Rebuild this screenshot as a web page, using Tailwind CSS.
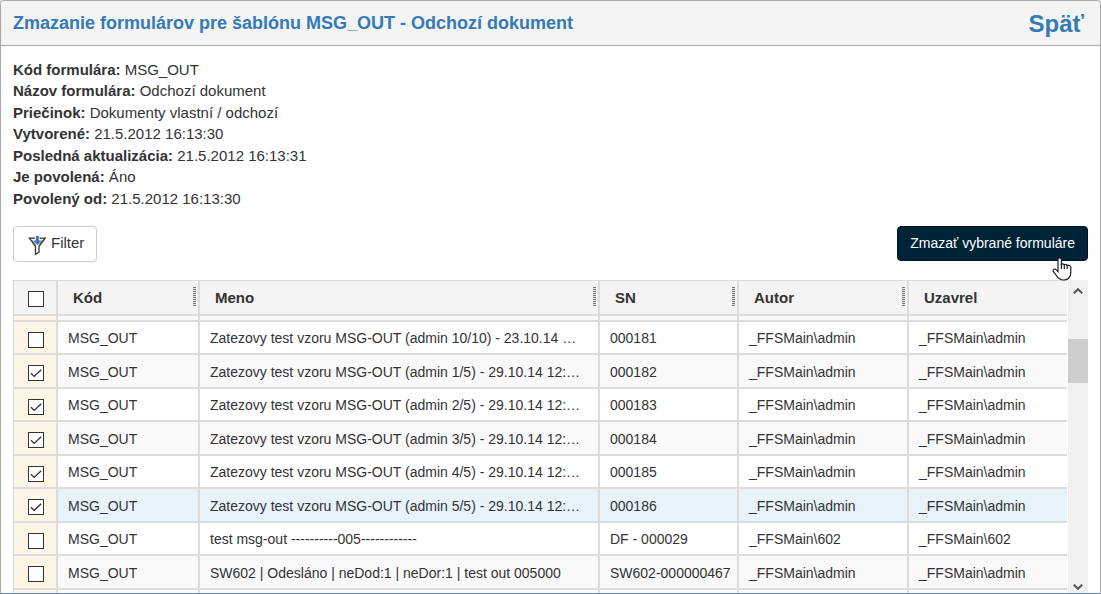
<!DOCTYPE html>
<html lang="sk">
<head>
<meta charset="utf-8">
<title>Zmazanie formulárov</title>
<script src="https://cdn.jsdelivr.net/npm/@tailwindcss/browser@4"></script>
</head>
<body class="bg-[#dcdcdc] font-['Liberation_Sans',Arial,sans-serif] text-[15px] text-[#333]">
<div class="flex h-screen flex-col overflow-hidden rounded-t-[5px] border border-[#a9a9a9] border-b-[#5b85b5] bg-white">
  <header class="flex h-[45px] shrink-0 items-center justify-between border-b border-[#a9a9a9] bg-[#f4f4f4] px-3 pr-4 text-[#337ab7]">
    <h1 class="text-[18px] font-bold">Zmazanie formulárov pre šablónu MSG_OUT - Odchozí dokument</h1>
    <a href="#" class="pt-[2px] text-[24px] font-bold">Späť</a>
  </header>
  <main class="flex min-h-0 flex-1 flex-col px-3 pt-[13px]">
    <div class="leading-[1.43]">
      <p><b>Kód formulára:</b> MSG_OUT</p>
      <p><b>Názov formulára:</b> Odchozí dokument</p>
      <p><b>Priečinok:</b> Dokumenty vlastní / odchozí</p>
      <p><b>Vytvorené:</b> 21.5.2012 16:13:30</p>
      <p><b>Posledná aktualizácia:</b> 21.5.2012 16:13:31</p>
      <p><b>Je povolená:</b> Áno</p>
      <p><b>Povolený od:</b> 21.5.2012 16:13:30</p>
    </div>
    <div class="mt-[17px] flex shrink-0 items-start justify-between">
      <button type="button" class="flex h-9 items-center gap-1 rounded border border-[#ccc] bg-white pr-3 pl-[14px]">
        <svg class="mt-[2px] h-[21px] w-[19px]" viewBox="0 0 19 21" fill="none" aria-hidden="true">
          <path d="M7 3.2H1.4L7.5 11.3V19.3L11 17.2V11.3L17.2 3.2H11.6" stroke="#333" stroke-width="1.3"/>
          <path d="M4 5.2L7.6 9.6M14.6 5.2L11 9.6" stroke="#555" stroke-width=".8"/>
          <path d="M8 1H10.8V5.6H13.6L9.4 10L5.2 5.6H8Z" fill="#337ab7"/>
        </svg>
        <span class="pb-px">Filter</span>
      </button>
      <div class="relative">
        <button type="button" class="h-[35px] rounded border border-[#00141f] bg-[#002337] px-3 text-[14px] text-white">Zmazať vybrané formuláre</button>
        <svg class="absolute top-[31px] right-[16px] h-[24px] w-[20px]" viewBox="0 0 20 24" aria-hidden="true">
          <path d="M6 2Q7.8 -.2 9.4 2V7.4Q11 6.2 12.2 7.8Q14 6.8 15 8.4Q17.4 7.6 18.8 9.8V15.5Q18.8 22.5 12 23Q7 23 4 18L1.1 14.2Q.8 11.6 3.6 12.2L6 14.6Z" fill="#fff" stroke="#1c1c2c" stroke-width="1.2"/>
          <path d="M9.4 7V12M12.3 7.8V12M15.2 8.4V12" stroke="#1c1c2c" stroke-width="1.2"/>
        </svg>
      </div>
    </div>
    <div class="mt-[18px] flex min-h-0 flex-1 gap-px">
      <div class="min-w-0 flex-1 overflow-hidden">
        <table class="w-full table-fixed border-separate border-spacing-0 text-left">
          <colgroup><col class="w-[45px]"><col class="w-[142px]"><col><col class="w-[139px]"><col class="w-[170px]"><col class="w-[158px]"></colgroup>
          <thead><tr id="head" class="h-9"></tr></thead>
          <tbody id="rows" class="text-[14px]"></tbody>
        </table>
      </div>
      <div class="flex w-5 shrink-0 flex-col items-center bg-[#f0f0f0] pt-2 pb-[3px]">
        <svg class="h-[6px] w-[10px]" viewBox="0 0 10 6" fill="none" aria-hidden="true"><path d="M.8 5.3L5 1.2L9.2 5.3" stroke="#555" stroke-width="2"/></svg>
        <div class="mt-[45px] h-11 w-full bg-[#cdcdcd]"></div>
        <svg class="mt-auto h-[6px] w-[10px]" viewBox="0 0 10 6" fill="none" aria-hidden="true"><path d="M.8 .7L5 4.8L9.2 .7" stroke="#555" stroke-width="2"/></svg>
      </div>
    </div>
  </main>
</div>
<script>
const tick = '<svg class="pointer-events-none col-start-1 row-start-1 size-4" viewBox="0 0 16 16" fill="none" aria-hidden="true"><path d="M3 8.3L6.2 11.4L13.2 4.8" stroke="#333" stroke-width="1.4"/></svg>';
const box = (label, on) => `<span class="grid w-4"><input type="checkbox" aria-label="${label}" ${on ? 'checked' : ''} class="col-start-1 row-start-1 size-4 appearance-none border border-[#333] bg-white">${on ? tick : ''}</span>`;
const grip = '<span class="mb-[3px] h-[19px] w-[3px] bg-[repeating-linear-gradient(#777_0_1px,#e4e4e4_1px_2px)]"></span>';

document.getElementById('head').innerHTML =
  `<th class="border-t border-r-2 border-b-2 border-l border-[#dcdcdc] bg-[#f4f4f4] p-0 pt-[10px] pl-[14px] align-top">${box('Vybrať všetko', false)}</th>` +
  ['Kód', 'Meno', 'SN', 'Autor'].map(t => `<th class="border-t border-r-2 border-b-2 border-[#dcdcdc] bg-[#f4f4f4] p-0 pr-[2px] pl-[15px]"><div class="flex items-center justify-between"><span class="pt-px">${t}</span>${grip}</div></th>`).join('') +
  '<th class="border-t border-b-2 border-[#dcdcdc] bg-[#f4f4f4] p-0 pl-[15px]"><span class="block pt-px">Uzavrel</span></th>';

const m = 'Zatezovy test vzoru MSG-OUT (admin ';
const data = [
  [0, m + '10/10) - 23.10.14 …', '000181', 'admin'],
  [1, m + '1/5) - 29.10.14 12:…', '000182', 'admin'],
  [1, m + '2/5) - 29.10.14 12:…', '000183', 'admin'],
  [1, m + '3/5) - 29.10.14 12:…', '000184', 'admin'],
  [1, m + '4/5) - 29.10.14 12:…', '000185', 'admin'],
  [1, m + '5/5) - 29.10.14 12:…', '000186', 'admin'],
  [0, 'test msg-out ----------005------------', 'DF - 000029', '602'],
  [0, 'SW602 | Odesláno | neDod:1 | neDor:1 | test out 005000', 'SW602-000000467', 'admin']
];
const edge = '<td class="border-r-2 border-b-2 border-l border-[#dcdcdc] bg-[#fdf5e6] p-0"></td>' +
  '<td class="border-r-2 border-b-2 border-[#dcdcdc] p-0"></td>'.repeat(4) + '<td class="border-b-2 border-[#dcdcdc] p-0"></td>';
const rows = data.map(([on, name, sn, who], i) => {
  const tr = i % 2 ? 'h-[34px]' : 'h-[33px]';
  const bg = i === 5 ? 'bg-[#e7f2fb]' : i % 2 ? 'bg-[#f9f9f9]' : 'bg-white';
  const cells = ['MSG_OUT', name, sn, '_FFSMain\\' + who]
    .map(t => `<td class="truncate border-r-2 border-b-2 border-[#dcdcdc] p-0 pt-[2px] pl-[10px] leading-[21px]">${t}</td>`).join('');
  return `<tr class="${tr} ${bg}"><td class="border-r-2 border-b-2 border-l border-[#dcdcdc] bg-[#fdf5e6] p-0 pt-[10px] pl-[14px] align-top">${box('Vybrať ' + sn, on)}</td>${cells}<td class="truncate border-b-2 border-[#dcdcdc] p-0 pt-[2px] pl-[10px] leading-[21px]">_FFSMain\\${who}</td></tr>`;
}).join('');
document.getElementById('rows').innerHTML =
  `<tr class="h-[6px] bg-[#f9f9f9]" aria-hidden="true">${edge}</tr>${rows}<tr class="h-[33px] bg-white" aria-hidden="true">${edge}</tr>`;
</script>
</body>
</html>
